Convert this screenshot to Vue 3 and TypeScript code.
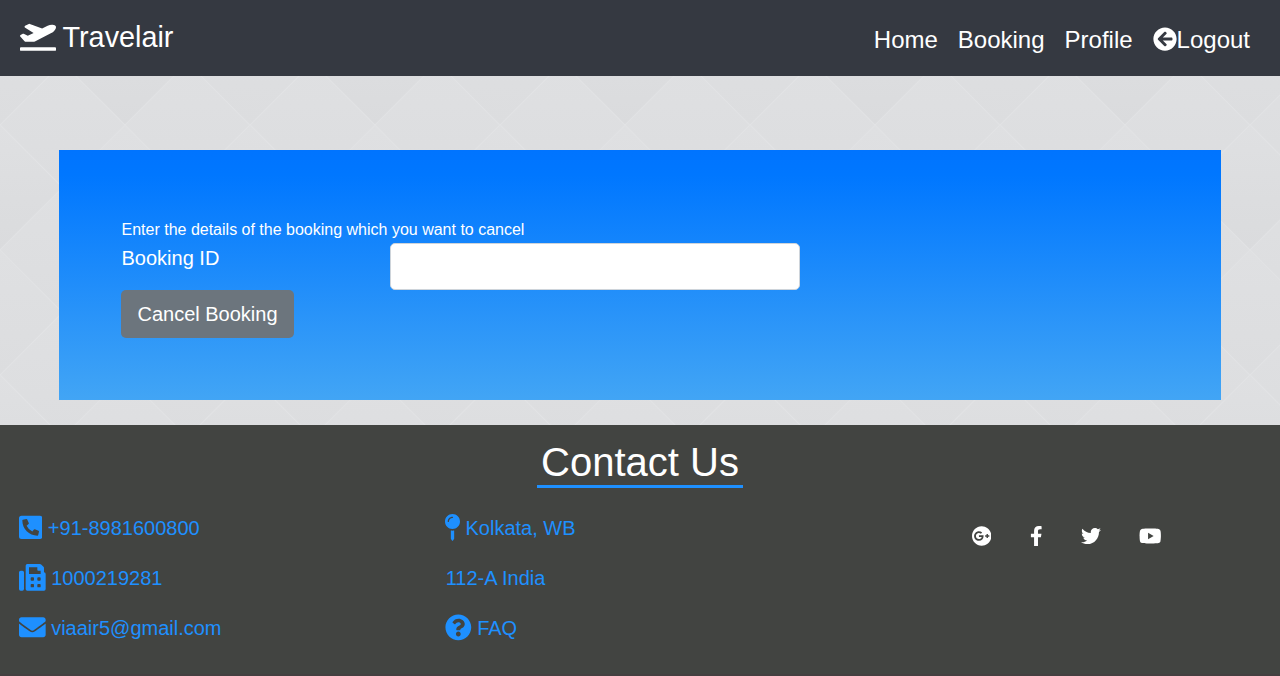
<script setup lang="ts">
import { ref } from 'vue'

interface Icon {
  width: number
  path: string
}

const icons: Record<string, Icon> = {
  plane: { width: 640, path: 'M624 448H16c-8.84 0-16 7.16-16 16v32c0 8.84 7.16 16 16 16h608c8.84 0 16-7.16 16-16v-32c0-8.84-7.16-16-16-16zM80.55 341.27c6.28 6.84 15.1 10.72 24.33 10.71l130.54-.18a65.62 65.62 0 0 0 29.64-7.12l290.96-147.65c26.74-13.57 50.71-32.94 67.02-58.31 18.31-28.48 20.3-49.09 13.07-63.65-7.21-14.57-24.74-25.27-58.25-27.45-29.85-1.94-59.54 5.92-86.28 19.48l-98.51 49.99-218.7-82.06a17.799 17.799 0 0 0-18-1.11L90.62 67.29c-10.67 5.41-13.25 19.65-5.17 28.53l156.22 98.1-103.21 52.38-72.35-36.47a17.804 17.804 0 0 0-16.07.02L9.91 230.22c-10.44 5.3-13.19 19.12-5.57 28.08l76.21 82.97z' },
  back: { width: 512, path: 'M256 504C119 504 8 393 8 256S119 8 256 8s248 111 248 248-111 248-248 248zm28.9-143.6L209.4 288H392c13.3 0 24-10.7 24-24v-16c0-13.3-10.7-24-24-24H209.4l75.5-72.4c9.7-9.3 9.9-24.8.4-34.3l-11-10.9c-9.4-9.4-24.6-9.4-33.9 0L107.7 239c-9.4 9.4-9.4 24.6 0 33.9l132.7 132.7c9.4 9.4 24.6 9.4 33.9 0l11-10.9c9.5-9.5 9.3-25-.4-34.3z' },
  phone: { width: 448, path: 'M400 32H48A48 48 0 0 0 0 80v352a48 48 0 0 0 48 48h352a48 48 0 0 0 48-48V80a48 48 0 0 0-48-48zm-16.39 307.37l-15 65A15 15 0 0 1 354 416C194 416 64 286.29 64 126a15.7 15.7 0 0 1 11.63-14.61l65-15A18.23 18.23 0 0 1 144 96a16.27 16.27 0 0 1 13.79 9.09l30 70A17.9 17.9 0 0 1 189 181a17 17 0 0 1-5.5 11.61l-37.89 31a231.91 231.91 0 0 0 110.78 110.78l31-37.89A17 17 0 0 1 299 291a17.85 17.85 0 0 1 5.91 1.21l70 30A16.25 16.25 0 0 1 384 336a17.41 17.41 0 0 1-.39 3.37z' },
  fax: { width: 512, path: 'M480 160V77.25a32 32 0 0 0-9.38-22.63L425.37 9.37A32 32 0 0 0 402.75 0H160a32 32 0 0 0-32 32v448a32 32 0 0 0 32 32h320a32 32 0 0 0 32-32V192a32 32 0 0 0-32-32zM288 432a16 16 0 0 1-16 16h-32a16 16 0 0 1-16-16v-32a16 16 0 0 1 16-16h32a16 16 0 0 1 16 16zm0-128a16 16 0 0 1-16 16h-32a16 16 0 0 1-16-16v-32a16 16 0 0 1 16-16h32a16 16 0 0 1 16 16zm128 128a16 16 0 0 1-16 16h-32a16 16 0 0 1-16-16v-32a16 16 0 0 1 16-16h32a16 16 0 0 1 16 16zm0-128a16 16 0 0 1-16 16h-32a16 16 0 0 1-16-16v-32a16 16 0 0 1 16-16h32a16 16 0 0 1 16 16zm0-112H192V64h160v48a16 16 0 0 0 16 16h48zM64 128H32a32 32 0 0 0-32 32v320a32 32 0 0 0 32 32h32a32 32 0 0 0 32-32V160a32 32 0 0 0-32-32z' },
  mail: { width: 512, path: 'M502.3 190.8c3.9-3.1 9.7-.2 9.7 4.7V400c0 26.5-21.5 48-48 48H48c-26.5 0-48-21.5-48-48V195.6c0-5 5.7-7.8 9.7-4.7 22.4 17.4 52.1 39.5 154.1 113.6 21.1 15.4 56.7 47.8 92.2 47.6 35.7.3 72-32.8 92.3-47.6 102-74.1 131.6-96.3 154-113.7zM256 320c23.2.4 56.6-29.2 73.4-41.4 132.7-96.3 142.8-104.7 173.4-128.7 5.8-4.5 9.2-11.5 9.2-18.9v-19c0-26.5-21.5-48-48-48H48c-26.5 0-48 21.5-48 48v19c0 7.4 3.4 14.3 9.2 18.9 30.6 23.9 40.7 32.4 173.4 128.7 16.8 12.2 50.2 41.8 73.4 41.4z' },
  pin: { width: 288, path: 'M112 316.94v156.69l22.02 33.02c4.75 7.12 15.22 7.12 19.97 0L176 473.63V316.94c-10.39 1.92-21.06 3.06-32 3.06s-21.61-1.14-32-3.06zM144 0C64.47 0 0 64.47 0 144s64.47 144 144 144 144-64.47 144-144S223.53 0 144 0zm0 76c-37.5 0-68 30.5-68 68 0 6.62-5.38 12-12 12s-12-5.38-12-12c0-50.73 41.28-92 92-92 6.62 0 12 5.38 12 12s-5.38 12-12 12z' },
  question: { width: 512, path: 'M504 256c0 136.997-111.043 248-248 248S8 392.997 8 256C8 119.083 119.043 8 256 8s248 111.083 248 248zM262.655 90c-54.497 0-89.255 22.957-116.549 63.758-3.536 5.286-2.353 12.415 2.715 16.258l34.699 26.31c5.205 3.947 12.621 3.008 16.665-2.122 17.864-22.658 30.113-35.797 57.303-35.797 20.429 0 45.698 13.148 45.698 32.958 0 14.976-12.363 22.667-32.534 33.976C247.128 238.528 216 254.941 216 296v4c0 6.627 5.373 12 12 12h56c6.627 0 12-5.373 12-12v-1.333c0-28.462 83.186-29.647 83.186-106.667 0-58.002-60.165-102-116.531-102zM256 338c-25.365 0-46 20.635-46 46 0 25.364 20.635 46 46 46s46-20.636 46-46c0-25.365-20.635-46-46-46z' },
  google: { width: 496, path: 'M248 8C111.1 8 0 119.1 0 256s111.1 248 248 248 248-111.1 248-248S384.9 8 248 8zm-70.7 372c-68.8 0-124-55.5-124-124s55.2-124 124-124c31.3 0 60.1 11 83 32.3l-33.6 32.6c-13.2-12.9-31.3-19.1-49.4-19.1-42.9 0-77.2 35.5-77.2 78.1s34.2 78.1 77.2 78.1c32.6 0 64.9-19.1 70.1-53.3h-70.1v-42.6h116.9c1.3 6.8 1.9 13.6 1.9 20.7 0 70.8-47.5 121.2-118.8 121.2zm230.2-106.2v35.5H372v-35.5h-35.5v-35.5H372v-35.5h35.5v35.5h35.2v35.5h-35.2z' },
  facebook: { width: 320, path: 'M279.14 288l14.22-92.66h-88.91v-60.13c0-25.35 12.42-50.06 52.24-50.06h40.42V6.26S260.43 0 225.36 0c-73.22 0-121.08 44.38-121.08 124.72v70.62H22.89V288h81.39v224h100.17V288z' },
  twitter: { width: 512, path: 'M459.37 151.716c.325 4.548.325 9.097.325 13.645 0 138.72-105.583 298.558-298.558 298.558-59.452 0-114.68-17.219-161.137-47.106 8.447.974 16.568 1.299 25.34 1.299 49.055 0 94.213-16.568 130.274-44.832-46.132-.975-84.792-31.188-98.112-72.772 6.498.974 12.995 1.624 19.818 1.624 9.421 0 18.843-1.3 27.614-3.573-48.081-9.747-84.143-51.98-84.143-102.985v-1.299c13.969 7.797 30.214 12.67 47.431 13.319-28.264-18.843-46.781-51.005-46.781-87.391 0-19.492 5.197-37.36 14.294-52.954 51.655 63.675 129.3 105.258 216.365 109.807-1.624-7.797-2.599-15.918-2.599-24.04 0-57.828 46.782-104.934 104.934-104.934 30.213 0 57.502 12.67 76.67 33.137 23.715-4.548 46.456-13.32 66.599-25.34-7.798 24.366-24.366 44.833-46.132 57.827 21.117-2.273 41.584-8.122 60.426-16.243-14.292 20.791-32.161 39.308-52.628 54.253z' },
  youtube: { width: 576, path: 'M549.655 124.083c-6.281-23.65-24.787-42.276-48.284-48.597C458.781 64 288 64 288 64S117.22 64 74.629 75.486c-23.497 6.322-42.003 24.947-48.284 48.597-11.412 42.867-11.412 132.305-11.412 132.305s0 89.438 11.412 132.305c6.281 23.65 24.787 41.5 48.284 47.821C117.22 448 288 448 288 448s170.78 0 213.371-11.486c23.497-6.321 42.003-24.171 48.284-47.821 11.412-42.867 11.412-132.305 11.412-132.305s0-89.438-11.412-132.305zm-317.51 213.508V175.185l142.739 81.205-142.739 81.201z' },
}

const bookingId = ref('')
const links = ['Home', 'Booking', 'Profile']
const contactColumns = [
  [
    { icon: 'phone', text: '+91-8981600800' },
    { icon: 'fax', text: '1000219281' },
    { icon: 'mail', text: 'viaair5@gmail.com' },
  ],
  [
    { icon: 'pin', text: 'Kolkata, WB' },
    { icon: '', text: '112-A India' },
    { icon: 'question', text: 'FAQ' },
  ],
]
const socials = ['google', 'facebook', 'twitter', 'youtube']

const diamond = (x: number, y: number) =>
  `M${x} ${y - 62.5}l62.5 62.5l-62.5 62.5l-62.5-62.5z`
const shaded = [[125, 62.5], [0, 187.5], [250, 187.5]]
const plain = [[0, 62.5], [250, 62.5], [125, 187.5]]
const between = [[62.5, 0], [187.5, 0], [62.5, 125], [187.5, 125], [62.5, 250], [187.5, 250]]
</script>

<template>
  <div class="page">
    <header class="navbar">
      <a class="brand">
        <svg class="brand-icon" viewBox="0 0 640 512"><path :d="icons.plane.path" /></svg>
        <span>Travelair</span>
      </a>
      <nav class="links">
        <a v-for="link in links" :key="link">{{ link }}</a>
        <a class="logout">
          <svg viewBox="0 0 512 512"><path :d="icons.back.path" /></svg>
          <span>Logout</span>
        </a>
      </nav>
    </header>

    <main class="content">
      <svg class="backdrop" width="1280" height="349" viewBox="0 76 1280 349" aria-hidden="true">
        <defs>
          <linearGradient id="tone-dark" x1="0" y1="0" x2="0" y2="1">
            <stop offset="0" stop-color="#dfe0e2" />
            <stop offset="1" stop-color="#dadbdd" />
          </linearGradient>
          <linearGradient id="tone-light" x1="0" y1="0" x2="0" y2="1">
            <stop offset="0" stop-color="#dfe0e2" />
            <stop offset="1" stop-color="#dcdddf" />
          </linearGradient>
          <linearGradient id="tone-mid" x1="0" y1="0" x2="0" y2="1">
            <stop offset="0" stop-color="#dfe0e2" />
            <stop offset="1" stop-color="#dcdddf" />
          </linearGradient>
          <pattern id="argyle" width="250" height="250" patternUnits="userSpaceOnUse">
            <rect width="250" height="250" fill="#dddee0" />
            <path v-for="p in shaded" :key="`s${p}`" :d="diamond(p[0], p[1])" fill="url(#tone-dark)" />
            <path v-for="p in plain" :key="`p${p}`" :d="diamond(p[0], p[1])" fill="url(#tone-light)" />
            <path v-for="p in between" :key="`b${p}`" :d="diamond(p[0], p[1])" fill="url(#tone-mid)" />
            <path d="M0 0L250 250M250 0L0 250M125 0L250 125M125 0L0 125M0 125L125 250M250 125L125 250" stroke="#e2e3e5" stroke-width="1.2" fill="none" />
          </pattern>
        </defs>
        <rect y="76" width="1280" height="349" fill="url(#argyle)" />
      </svg>
      <form class="panel" @submit.prevent>
        <p>Enter the details of the booking which you want to cancel</p>
        <div class="field">
          <label for="booking-id">Booking ID</label>
          <input id="booking-id" v-model="bookingId" type="text" />
        </div>
        <button type="submit">Cancel Booking</button>
      </form>
    </main>

    <footer class="footer">
      <h1>Contact Us</h1>
      <div class="columns">
        <ul v-for="(column, i) in contactColumns" :key="i" class="contacts">
          <li v-for="item in column" :key="item.text">
            <svg v-if="item.icon" :class="item.icon" :viewBox="`0 0 ${icons[item.icon].width} 512`">
              <path :d="icons[item.icon].path" />
            </svg>
            <a>{{ item.text }}</a>
          </li>
        </ul>
        <div class="socials">
          <svg v-for="name in socials" :key="name" :class="name" :viewBox="`0 0 ${icons[name].width} 512`">
            <path :d="icons[name].path" />
          </svg>
        </div>
      </div>
    </footer>
  </div>
</template>

<style>
body {
  margin: 0;
  overflow: hidden;
}
</style>

<style scoped>
* {
  box-sizing: border-box;
}
.page {
  display: flex;
  flex-direction: column;
  height: 676px;
  font-family: "Liberation Sans", Arial, sans-serif;
  color: #fff;
}
svg {
  fill: currentColor;
  flex: none;
}
.navbar {
  height: 76px;
  flex: none;
  display: flex;
  justify-content: space-between;
  align-items: center;
  padding: 0 30px 0 20px;
  background: #353941;
}
.brand {
  display: flex;
  align-items: center;
  gap: 6.5px;
  font-size: 28.8px;
  line-height: 44px;
  padding-bottom: 2px;
}
.brand-icon {
  width: 36px;
  height: 28.8px;
  margin-bottom: 1px;
}
.links {
  display: flex;
  gap: 20px;
  font-size: 24px;
  line-height: 36px;
  padding-top: 3px;
}
.logout {
  display: flex;
  align-items: center;
}
.logout svg {
  width: 24px;
  height: 24px;
  margin-bottom: 2px;
}
.content {
  position: relative;
  height: 349px;
  flex: none;
  padding: 74px 59px 25px;
}
.backdrop {
  position: absolute;
  inset: 0;
}
.panel {
  position: relative;
  height: 250px;
  padding: 68px 62px 62px;
  background: linear-gradient(#0074ff, #0077ff 10%, #42a5f5);
}
.panel p {
  margin: 0;
  font-size: 16px;
  line-height: 24px;
  padding-left: 0.5px;
}
.field {
  display: grid;
  grid-template-columns: 269px 410px;
  margin-top: 1px;
  align-items: start;
}
.field label {
  font-size: 20px;
  line-height: 30px;
  padding-left: 0.5px;
}
.field input {
  width: 100%;
  height: 47px;
  border: 1px solid #ced4da;
  border-radius: 5px;
  padding: 8px 16px;
  font: 20px "Liberation Sans", Arial, sans-serif;
  background: #fff;
  outline: none;
}
.panel button {
  display: block;
  width: 173px;
  height: 48px;
  border: 0;
  border-radius: 5px;
  padding: 0;
  background: #6c757d;
  color: #fff;
  font: 20px/30px "Liberation Sans", Arial, sans-serif;
}
.footer {
  height: 251px;
  flex: none;
  background: #424441;
  border-bottom: 2px solid #443f40;
  display: flex;
  flex-direction: column;
  align-items: center;
}
.footer h1 {
  margin: 13px 0 0;
  height: 50px;
  padding: 0 4px;
  font-size: 40px;
  font-weight: 400;
  line-height: 48px;
  border-bottom: 3px solid #1e90ff;
}
.columns {
  width: 100%;
  display: grid;
  grid-template-columns: 426px 427px 1fr;
  padding-top: 15px;
}
.contacts {
  list-style: none;
  margin: 0;
  padding: 0 0 0 19px;
  color: #1e90ff;
  font-size: 20px;
}
.contacts li {
  height: 50px;
  display: flex;
  align-items: center;
  gap: 5.5px;
}
.contacts li a:only-child {
  padding-left: 0.7px;
}
.contacts svg {
  height: 26.67px;
  margin-bottom: 1.4px;
}
.contacts .phone {
  width: 23.33px;
}
.contacts .pin {
  width: 15px;
}
.contacts .fax,
.contacts .mail,
.contacts .question {
  width: 26.67px;
}
.socials {
  display: flex;
  height: 20px;
  margin-top: 23px;
  padding-left: 119px;
}
.socials svg {
  height: 20px;
}
.socials .google {
  width: 19.4px;
}
.socials .facebook {
  width: 12.5px;
  margin-left: 38.6px;
}
.socials .twitter {
  width: 20px;
  margin-left: 38.2px;
}
.socials .youtube {
  width: 22.5px;
  margin-left: 38px;
}
</style>
